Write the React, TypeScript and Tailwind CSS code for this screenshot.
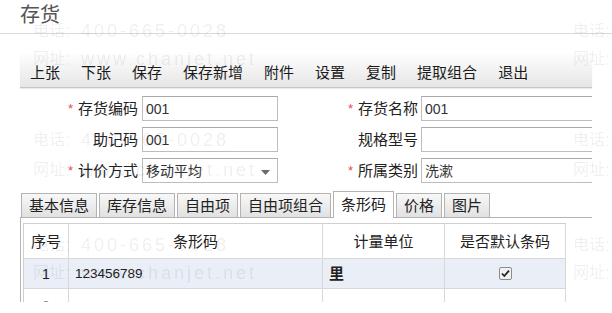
import React from 'react';

const tools = ['上张', '下张', '保存', '保存新增', '附件', '设置', '复制', '提取组合', '退出'];
const tabs = ['基本信息', '库存信息', '自由项', '自由项组合', '条形码', '价格', '图片'];

const marks = [
  { top: 21, kind: 'tel' },
  { top: 49, kind: 'web' },
  { top: 130, kind: 'tel' },
  { top: 160, kind: 'web' },
  { top: 235, kind: 'tel' },
  { top: 263, kind: 'web' },
];

const Label: React.FC<{ text: string; req?: boolean; w: string }> = ({ text, req, w }) => (
  <div className={`${w} flex items-center justify-end text-[15px] leading-none text-[#222]`}>
    {req && <span className="mr-[5px] text-[13px] text-[#e8475c]">*</span>}
    {text}
  </div>
);

const Input: React.FC<{ value?: string; select?: boolean; className: string }> = ({ value, select, className }) => (
  <div className={`${className} relative flex h-[25px] items-center border border-[#bdbdbd] border-t-[#a9a9a9] bg-white pl-[3px] text-[14px] leading-none text-[#333]`}>
    {value}
    {select && (
      <svg className="absolute right-[7px] top-[11px]" width="9" height="5" viewBox="0 0 9 5">
        <path d="M0 0h9L4.5 5z" fill="#6b6b6b" />
      </svg>
    )}
  </div>
);

export default function App() {
  return (
    <div className="relative h-[313px] w-[612px] overflow-hidden bg-white font-['Liberation_Sans','Noto_Sans_CJK_SC',sans-serif] text-[#222]">
      <div className="h-[34px] border-b border-[#d9d9d9] pl-[20px] pt-[4px] text-[20px] leading-[22px] text-[#555]">存货</div>

      <div className="mx-[20px] mt-[19px] flex h-[35px] items-center gap-[21px] border-b border-[#c6c6c6] bg-linear-to-b from-[#fefefe] to-[#e6e6e6] pl-[10px] pt-[4px] text-[15px] leading-none text-[#1a1a1a] shadow-[0_1px_1px_rgba(0,0,0,0.08)]">
        {tools.map((t) => (
          <span key={t}>{t}</span>
        ))}
      </div>

      <div className="mt-[8px] flex flex-col gap-[6px]">
        <div className="flex h-[25px]">
          <Label text="存货编码" req w="w-[138px]" />
          <Input value="001" className="ml-[4px] w-[136px]" />
          <Label text="存货名称" req w="w-[140px]" />
          <Input value="001" className="ml-[3px] w-[171px] border-r-0" />
        </div>
        <div className="flex h-[25px]">
          <Label text="助记码" w="w-[138px]" />
          <Input value="001" className="ml-[4px] w-[136px]" />
          <Label text="规格型号" w="w-[140px]" />
          <Input className="ml-[3px] w-[171px] border-r-0" />
        </div>
        <div className="flex h-[25px]">
          <Label text="计价方式" req w="w-[138px]" />
          <Input value="移动平均" select className="ml-[4px] w-[136px]" />
          <Label text="所属类别" req w="w-[140px]" />
          <Input value="洗漱" className="ml-[3px] w-[171px] border-r-0" />
        </div>
      </div>

      <div className="ml-[21px] mt-[8px] flex h-[26px] items-end gap-[2px]">
        {tabs.map((t) =>
          t === '条形码' ? (
            <div key={t} className="relative z-10 -mb-px flex h-[27px] items-center border border-b-0 border-[#b3b3b3] bg-white px-[7px] pb-[2px] text-[15px] leading-none">
              {t}
            </div>
          ) : (
            <div key={t} className="flex h-[24px] items-center border border-b-0 border-[#b3b3b3] bg-linear-to-b from-[#f8f8f8] to-[#e1e1e1] px-[7px] text-[15px] leading-none">
              {t}
            </div>
          ),
        )}
      </div>

      <div className="mx-[20px] h-[85px] overflow-hidden border-l border-t border-[#b3b3b3] pl-[2px] pt-[5px]">
        <div className="grid w-[543px] grid-cols-[45px_254px_122px_121px] border-l border-t border-[#cfcfcf] text-[15px] leading-none">
          {['序号', '条形码', '计量单位', '是否默认条码'].map((h) => (
            <div key={h} className="flex h-[35px] items-center justify-center border-b border-r border-[#d8d8d8]">
              {h}
            </div>
          ))}
          <div className="flex h-[30px] items-center justify-center border-b border-r border-[#d8d8d8] bg-[#e9eef7] text-[14px]">1</div>
          <div className="flex h-[30px] items-center border-b border-r border-[#d8d8d8] bg-[#e9eef7] pl-[6px] text-[13.5px]">123456789</div>
          <div className="flex h-[30px] items-center border-b border-r border-[#d8d8d8] bg-[#e9eef7] pl-[6px] font-bold">里</div>
          <div className="flex h-[30px] items-center justify-center border-b border-r border-[#d8d8d8] bg-[#e9eef7]">
            <svg width="13" height="13" viewBox="0 0 13 13">
              <rect x="0.5" y="0.5" width="12" height="12" rx="1.5" fill="#f1f1f1" stroke="#8c8c8c" />
              <path d="M3 6.5l2.3 2.5L10 3.6" fill="none" stroke="#222" strokeWidth="1.8" />
            </svg>
          </div>
          <div className="flex h-[30px] items-start justify-center border-r border-[#d8d8d8] pt-[10px] text-[14px] text-[#888]">2</div>
          <div className="h-[30px] border-r border-[#d8d8d8]" />
          <div className="h-[30px] border-r border-[#d8d8d8]" />
          <div className="h-[30px] border-r border-[#d8d8d8]" />
        </div>
      </div>

      <div className="pointer-events-none absolute inset-0 text-black/[0.08]">
        {marks.map((m) =>
          [33, 573].map((x) => (
            <div key={`${m.top}-${x}`} className="absolute flex items-center whitespace-nowrap leading-[20px]" style={{ top: m.top, left: x }}>
              <span className="text-[16px]">{m.kind === 'tel' ? '电话' : '网址'}</span>
              <span className="text-[18px] tracking-[3px]">{m.kind === 'tel' ? ': 400-665-0028' : ': www.chanjet.net'}</span>
            </div>
          )),
        )}
      </div>
    </div>
  );
}
